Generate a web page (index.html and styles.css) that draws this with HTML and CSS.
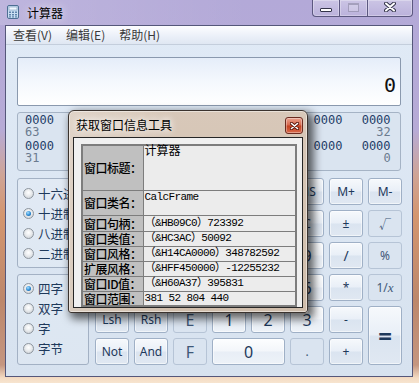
FILE: index.html
```html
<!DOCTYPE html>
<html lang="zh-CN">
<head>
    <meta charset="UTF-8">
    <meta name="viewport" content="width=device-width, initial-scale=1.0">
    <title>计算器</title>
    <link rel="stylesheet" href="styles.css">
</head>
<body>
<div class="desktop">
    <div class="window">
        <div class="titlebar">
            <svg class="app-icon" width="12" height="14" viewBox="0 0 12 14">
                <rect x="0.5" y="0.5" width="11" height="13" rx="1.5" fill="#c9def2" stroke="#4d6f93"/>
                <rect x="2" y="2" width="8" height="3" fill="#f2f9ff" stroke="#7d9bbb" stroke-width="0.6"/>
                <g fill="#5f83ab">
                    <rect x="2" y="6.5" width="2" height="1.5"/><rect x="5" y="6.5" width="2" height="1.5"/><rect x="8" y="6.5" width="2" height="1.5"/>
                    <rect x="2" y="9" width="2" height="1.5"/><rect x="5" y="9" width="2" height="1.5"/><rect x="8" y="9" width="2" height="1.5"/>
                    <rect x="2" y="11.3" width="2" height="1.2"/><rect x="5" y="11.3" width="2" height="1.2"/><rect x="8" y="11.3" width="2" height="1.2"/>
                </g>
            </svg>
            <span class="title">计算器</span>
            <div class="caption">
                <span class="cap cap-min"><i></i></span>
                <span class="cap cap-max"><i></i></span>
                <span class="cap cap-close">
                    <svg width="12" height="10" viewBox="0 0 12 10">
                        <path d="M2 1.5 L10 8.5 M10 1.5 L2 8.5" stroke="#34344a" stroke-width="4" stroke-linecap="round"/>
                        <path d="M2 1.5 L10 8.5 M10 1.5 L2 8.5" stroke="#fff" stroke-width="2" stroke-linecap="round"/>
                    </svg>
                </span>
            </div>
        </div>

        <div class="client">
            <nav class="menubar">
                <span>查看(V)</span>
                <span>编辑(E)</span>
                <span>帮助(H)</span>
            </nav>

            <div class="calc">
                <div class="display">0</div>

                <!-- binary readout -->
                <div class="bits">
                    <div class="bit-row"><span>0000</span><span>0000</span><span>0000</span><span>0000</span><span>0000</span><span>0000</span><span>0000</span><span>0000</span></div>
                    <div class="bit-labels"><span>63</span><span class="c4">47</span><span class="c8">32</span></div>
                    <div class="bit-row second"><span>0000</span><span>0000</span><span>0000</span><span>0000</span><span>0000</span><span>0000</span><span>0000</span><span>0000</span></div>
                    <div class="bit-labels"><span>31</span><span class="c4">15</span><span class="c8">0</span></div>
                </div>

                <div class="pad">
                    <div class="modes">
                        <div class="group">
                            <div class="radio"><i class="dot"></i>十六进制</div>
                            <div class="radio"><i class="dot on"></i>十进制</div>
                            <div class="radio"><i class="dot"></i>八进制</div>
                            <div class="radio"><i class="dot"></i>二进制</div>
                        </div>
                        <div class="group size">
                            <div class="radio"><i class="dot on"></i>四字</div>
                            <div class="radio"><i class="dot"></i>双字</div>
                            <div class="radio"><i class="dot"></i>字</div>
                            <div class="radio"><i class="dot"></i>字节</div>
                        </div>
                    </div>

                    <div class="keys">
                        <span class="key off">Quot</span><span class="key">Mod</span><span class="key off hex">A</span><span class="key">MC</span><span class="key">MR</span><span class="key">MS</span><span class="key">M+</span><span class="key">M-</span>
                        <span class="key">(</span><span class="key">)</span><span class="key off hex">B</span><span class="key">&larr;</span><span class="key">CE</span><span class="key">C</span><span class="key">&plusmn;</span><span class="key off">&radic;</span>
                        <span class="key">RoL</span><span class="key">RoR</span><span class="key off hex">C</span><span class="key num">7</span><span class="key num">8</span><span class="key num">9</span><span class="key op">/</span><span class="key off">%</span>
                        <span class="key">Or</span><span class="key">Xor</span><span class="key off hex">D</span><span class="key num">4</span><span class="key num">5</span><span class="key num">6</span><span class="key">*</span><span class="key off">1/<i class="var">x</i></span>
                        <span class="key">Lsh</span><span class="key">Rsh</span><span class="key off hex">E</span><span class="key num">1</span><span class="key num">2</span><span class="key num">3</span><span class="key">-</span><span class="key tall">=</span>
                        <span class="key">Not</span><span class="key">And</span><span class="key off hex">F</span><span class="key num wide">0</span><span class="key off">.</span><span class="key">+</span>
                    </div>
                </div>
            </div>
        </div>
    </div>

    <!-- info tool window on top -->
    <div class="dialog">
        <div class="dlg-title">
            <span class="dlg-text">获取窗口信息工具</span>
            <span class="dlg-close">
                <svg width="9" height="8" viewBox="0 0 9 8">
                    <path d="M1.5 1.5 L7.5 6.5 M7.5 1.5 L1.5 6.5" stroke="#5a1a10" stroke-width="3.4" stroke-linecap="round"/>
                    <path d="M1.5 1.5 L7.5 6.5 M7.5 1.5 L1.5 6.5" stroke="#fff" stroke-width="1.6" stroke-linecap="round"/>
                </svg>
            </span>
        </div>
        <div class="dlg-client">
            <table class="info">
                <tr class="r-title"><th>窗口标题：</th><td>计算器</td></tr>
                <tr class="r-class"><th>窗口类名：</th><td>CalcFrame</td></tr>
                <tr class="r-first"><th>窗口句柄：</th><td>（&amp;HB09C0）723392</td></tr>
                <tr><th>窗口类值：</th><td>（&amp;HC3AC）50092</td></tr>
                <tr><th>窗口风格：</th><td>（&amp;H14CA0000）348782592</td></tr>
                <tr><th>扩展风格：</th><td>（&amp;HFF450000）-12255232</td></tr>
                <tr><th>窗口ID值：</th><td>（&amp;H60A37）395831</td></tr>
                <tr><th>窗口范围：</th><td>381 52 804 440</td></tr>
            </table>
        </div>
    </div>
</div>
</body>
</html>
```

FILE: styles.css
```css
/* Reset */
* {
    margin: 0;
    padding: 0;
    box-sizing: border-box;
}

body {
    font-family: "Noto Sans", "Noto Sans CJK SC", sans-serif;
    overflow: hidden;
}

/* Desktop + wallpaper behind the glass frame */
.desktop {
    position: relative;
    width: 419px;
    height: 383px;
    background: linear-gradient(to bottom, #b3a9d8 0px, #b7abd6 130px, #cfa496 175px, #d4966f 215px, #bd876b 300px, #c59680 365px, #f4dcc4 378px, #f7e4cf 383px);
}

.window {
    display: flex;
    flex-direction: column;
    height: 100%;
}

/* Title bar */
.titlebar {
    height: 25px;
    display: flex;
    align-items: flex-start;
    background: linear-gradient(to right, rgba(255,255,255,0.14), rgba(255,255,255,0) 60%);
}

.app-icon {
    margin: 5px 0 0 7px;
}

.title {
    margin: 4px 0 0 8px;
    font-family: "Noto Sans CJK SC", sans-serif;
    font-size: 12px;
    line-height: 17px;
    color: #000;
    text-shadow: 0 0 8px rgba(255,255,255,0.9);
}

.caption {
    margin-left: auto;
    margin-right: 6px;
    display: flex;
    height: 17px;
}

.cap {
    display: flex;
    align-items: center;
    justify-content: center;
    height: 17px;
    border: 1px solid #5c5880;
    border-top: none;
    background: linear-gradient(rgba(255,255,255,0.32), rgba(255,255,255,0.1));
    box-shadow: inset 0 0 0 1px rgba(255,255,255,0.3);
}

.cap-min {
    width: 27px;
    border-right: none;
    border-bottom-left-radius: 4px;
}

.cap-min i {
    width: 12px;
    height: 4px;
    margin-top: 3px;
    border: 1px solid #34344a;
    border-radius: 1px;
    background: #fff;
}

.cap-max {
    width: 28px;
    border-right: none;
}

.cap-max i {
    width: 11px;
    height: 9px;
    margin-bottom: 2px;
    border: 1px solid rgba(80,76,110,0.35);
    border-top-width: 2px;
    background: rgba(255,255,255,0.2);
}

.cap-close {
    width: 46px;
    border-bottom-right-radius: 4px;
}

.cap-close svg {
    margin-bottom: 3px;
}

/* Client area */
.client {
    flex: 1;
    margin: 0 6px 6px 5px;
    border: 1px solid #55577a;
    background: linear-gradient(#e0eaf6, #d7e2ef);
    display: flex;
    flex-direction: column;
}

.menubar {
    height: 19px;
    display: flex;
    align-items: center;
    background: linear-gradient(#fdfdff, #eaeff8 60%, #dfe7f2);
    border-bottom: 1px solid #c4cedc;
}

.menubar span {
    padding: 0 7px;
    font-family: "Noto Sans CJK SC", sans-serif;
    font-size: 12px;
    line-height: 16px;
    color: #3a3a3a;
}

.calc {
    padding: 12px 11px 0 11px;
}

.display {
    height: 49px;
    border: 1px solid #8a99ae;
    border-radius: 2px;
    background: linear-gradient(#e5edf9, #f4f8fd 50%, #fff);
    text-align: right;
    padding: 14px 4px 0 0;
    font-family: "DejaVu Sans Mono", monospace;
    font-size: 20px;
    line-height: 26px;
    color: #111;
}

/* Binary readout */
.bits {
    margin-top: 6px;
    height: 59px;
    border: 1px solid #a5b3c5;
    border-radius: 3px;
    padding: 1px 0 0 7px;
    background: #dae4f0;
    font-family: "DejaVu Sans Mono", monospace;
    font-size: 12px;
}

.bit-row,
.bit-labels {
    display: grid;
    grid-template-columns: repeat(8, 29px);
    column-gap: 19.1px;
    line-height: 12px;
}

.bit-row {
    color: #1f3e68;
}

.bit-row.second {
    margin-top: 2px;
}

.bit-labels {
    color: #6b7b8f;
}

.bit-labels .c4 {
    grid-column: 4;
    justify-self: end;
}

.bit-labels .c8 {
    grid-column: 8;
    justify-self: end;
}

/* Radios + keypad */
.pad {
    margin-top: 7px;
    display: flex;
    gap: 6px;
}

.modes {
    width: 72px;
    display: flex;
    flex-direction: column;
    gap: 6px;
}

.group {
    height: 90px;
    border: 1px solid #a3b1c4;
    border-radius: 3px;
    padding: 4px 0 0 5px;
    background: rgba(255,255,255,0.15);
}

.group.size {
    height: 91px;
    padding-top: 3px;
}

.radio {
    display: flex;
    align-items: center;
    height: 20px;
    font-family: "Noto Sans CJK SC", sans-serif;
    font-size: 12.5px;
    color: #1e395b;
    white-space: nowrap;
}

.dot {
    position: relative;
    flex: none;
    width: 11px;
    height: 11px;
    margin-right: 4px;
    border: 1px solid #8e969f;
    border-radius: 50%;
    background: radial-gradient(circle at 50% 40%, #fff 0, #eceef0 40%, #c6cbd1 100%);
}

.dot.on::after {
    content: "";
    position: absolute;
    left: 2px;
    top: 2px;
    width: 5px;
    height: 5px;
    border-radius: 50%;
    background: radial-gradient(circle at 40% 35%, #a8e0ff, #2b8ad4 55%, #0c4a8a);
}

.keys {
    display: grid;
    grid-template-columns: repeat(8, 34px);
    grid-template-rows: repeat(6, 27px);
    gap: 5px;
}

.key {
    display: flex;
    align-items: center;
    justify-content: center;
    border: 1px solid #9fb0c6;
    border-radius: 3px;
    background: linear-gradient(#f6f9fc, #e9eff7 48%, #dae4f0 52%, #e0e8f2);
    box-shadow: inset 0 0 0 1px rgba(255,255,255,0.55);
    font-size: 12px;
    color: #1e395b;
}

.key.num {
    background: linear-gradient(#fdfeff, #f3f6fa 48%, #e8eef6 52%, #edf2f8);
    font-size: 16px;
}

.key.op {
    font-size: 14px;
}

.key.off {
    background: #dae4f0;
    border-color: #b6c4d6;
    box-shadow: none;
    color: #3f5878;
}

.key.hex {
    font-size: 16px;
}

.key.wide {
    grid-column: span 2;
}

.key.tall {
    grid-row: span 2;
    font-size: 24px;
    font-weight: 700;
}

.var {
    font-family: "Liberation Serif", serif;
    font-size: 13px;
}

/* Info tool window */
.dialog {
    position: absolute;
    left: 68px;
    top: 110px;
    width: 240px;
    height: 203px;
    display: flex;
    flex-direction: column;
    border: 1px solid #3b332e;
    border-radius: 6px 6px 3px 3px;
    background: linear-gradient(to right, rgba(255,255,255,0.22), rgba(255,255,255,0) 45%), linear-gradient(#d8c8b9, #cfbdab);
    box-shadow: 4px 4px 8px 2px rgba(0,0,0,0.6), inset 0 0 0 1px rgba(255,255,255,0.45);
}

.dlg-title {
    height: 26px;
    display: flex;
    align-items: flex-start;
    padding-left: 7px;
}

.dlg-text {
    margin-top: 6px;
    font-family: "Noto Sans CJK SC", sans-serif;
    font-size: 12px;
    line-height: 16px;
    color: #000;
    text-shadow: 0 0 6px #fff, 0 0 10px rgba(255,255,255,0.8);
}

.dlg-close {
    margin: 6px 4px 0 auto;
    width: 18px;
    height: 17px;
    display: flex;
    align-items: center;
    justify-content: center;
    border: 1px solid #6b2b20;
    border-radius: 3px;
    background: linear-gradient(#eba38f, #d6664b 48%, #c2401f 52%, #d9694a);
    box-shadow: inset 0 0 0 1px rgba(255,255,255,0.35);
}

.dlg-client {
    flex: 1;
    margin: 0 4px 4px 4px;
    border: 1px solid #262626;
    background: #f0f0f0;
    padding: 6px 0 0 7px;
}

.info {
    border-collapse: collapse;
    table-layout: fixed;
    width: 216px;
    border: 2px solid #7d7d7d;
}

.info th {
    width: 61px;
    padding: 0 0 0 1px;
    border: 1px solid #7d7d7d;
    background: #c0c0c0;
    text-align: left;
    font-weight: 500;
    font-family: "Noto Sans CJK SC", sans-serif;
    font-size: 12px;
    letter-spacing: -0.5px;
    line-height: 13px;
    white-space: nowrap;
    color: #000;
}

.info td {
    height: 15px;
    padding: 0 0 0 1px;
    border: 1px solid #7d7d7d;
    background: #ececec;
    font-family: "Liberation Mono", "Noto Sans CJK SC", monospace;
    font-size: 11px;
    letter-spacing: -0.6px;
    line-height: 13px;
    white-space: nowrap;
    color: #000;
}

.info .r-title td {
    height: 45px;
    vertical-align: top;
    font-size: 12px;
    letter-spacing: 0;
}

.info .r-class td {
    height: 25px;
    vertical-align: top;
}

.info .r-first td {
    height: 16px;
}
```
